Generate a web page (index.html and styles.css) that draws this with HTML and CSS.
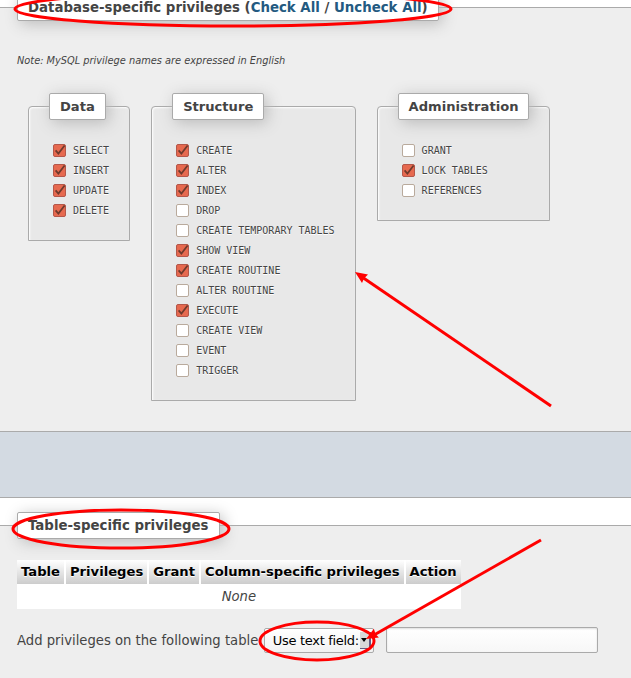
FILE: index.html
```html
<!DOCTYPE html>
<html>
<head>
<meta charset="utf-8">
<title>Privileges</title>
<link rel="stylesheet" href="styles.css">
</head>
<body>
<fieldset class="outer first">
  <legend class="lg">Database-specific privileges (<a href="#">Check All</a> / <a href="#">Uncheck All</a>)</legend>
  <p class="note">Note: MySQL privilege names are expressed in English</p>
  <div class="groups">
    <fieldset class="grp">
      <legend class="lg">Data</legend>
      <div class="item"><span class="cb on"><svg viewBox="0 0 13 13"><path d="M2.6 6.4 L5.4 9.6 L11.6 1.6"/></svg></span><span class="lbl">SELECT</span></div>
      <div class="item"><span class="cb on"><svg viewBox="0 0 13 13"><path d="M2.6 6.4 L5.4 9.6 L11.6 1.6"/></svg></span><span class="lbl">INSERT</span></div>
      <div class="item"><span class="cb on"><svg viewBox="0 0 13 13"><path d="M2.6 6.4 L5.4 9.6 L11.6 1.6"/></svg></span><span class="lbl">UPDATE</span></div>
      <div class="item"><span class="cb on"><svg viewBox="0 0 13 13"><path d="M2.6 6.4 L5.4 9.6 L11.6 1.6"/></svg></span><span class="lbl">DELETE</span></div>
    </fieldset>
    <fieldset class="grp">
      <legend class="lg">Structure</legend>
      <div class="item"><span class="cb on"><svg viewBox="0 0 13 13"><path d="M2.6 6.4 L5.4 9.6 L11.6 1.6"/></svg></span><span class="lbl">CREATE</span></div>
      <div class="item"><span class="cb on"><svg viewBox="0 0 13 13"><path d="M2.6 6.4 L5.4 9.6 L11.6 1.6"/></svg></span><span class="lbl">ALTER</span></div>
      <div class="item"><span class="cb on"><svg viewBox="0 0 13 13"><path d="M2.6 6.4 L5.4 9.6 L11.6 1.6"/></svg></span><span class="lbl">INDEX</span></div>
      <div class="item"><span class="cb"></span><span class="lbl">DROP</span></div>
      <div class="item"><span class="cb"></span><span class="lbl">CREATE TEMPORARY TABLES</span></div>
      <div class="item"><span class="cb on"><svg viewBox="0 0 13 13"><path d="M2.6 6.4 L5.4 9.6 L11.6 1.6"/></svg></span><span class="lbl">SHOW VIEW</span></div>
      <div class="item"><span class="cb on"><svg viewBox="0 0 13 13"><path d="M2.6 6.4 L5.4 9.6 L11.6 1.6"/></svg></span><span class="lbl">CREATE ROUTINE</span></div>
      <div class="item"><span class="cb"></span><span class="lbl">ALTER ROUTINE</span></div>
      <div class="item"><span class="cb on"><svg viewBox="0 0 13 13"><path d="M2.6 6.4 L5.4 9.6 L11.6 1.6"/></svg></span><span class="lbl">EXECUTE</span></div>
      <div class="item"><span class="cb"></span><span class="lbl">CREATE VIEW</span></div>
      <div class="item"><span class="cb"></span><span class="lbl">EVENT</span></div>
      <div class="item"><span class="cb"></span><span class="lbl">TRIGGER</span></div>
    </fieldset>
    <fieldset class="grp">
      <legend class="lg">Administration</legend>
      <div class="item"><span class="cb"></span><span class="lbl">GRANT</span></div>
      <div class="item"><span class="cb on"><svg viewBox="0 0 13 13"><path d="M2.6 6.4 L5.4 9.6 L11.6 1.6"/></svg></span><span class="lbl">LOCK TABLES</span></div>
      <div class="item"><span class="cb"></span><span class="lbl">REFERENCES</span></div>
    </fieldset>
  </div>
</fieldset>
<div class="band"></div>
<fieldset class="outer second">
  <legend class="lg">Table-specific privileges</legend>
  <table class="tbl">
    <thead>
      <tr><th>Table</th><th>Privileges</th><th>Grant</th><th>Column-specific privileges</th><th>Action</th></tr>
    </thead>
    <tbody>
      <tr><td colspan="5" class="none">None</td></tr>
    </tbody>
  </table>
  <div class="addrow">
    <span class="addlbl">Add privileges on the following table:</span>
    <span class="sel"><span class="seltext">Use text field:</span><span class="selbtn"><span class="tri"></span></span></span>
    <span class="txt"></span>
  </div>
</fieldset>
<svg class="marks" width="631" height="678" viewBox="0 0 631 678">
  <g fill="none" stroke="#f00" stroke-width="3">
    <ellipse cx="233" cy="9" rx="218" ry="17"/>
    <ellipse cx="121" cy="529" rx="108" ry="19"/>
    <ellipse cx="317" cy="641" rx="57" ry="19"/>
    <line x1="551" y1="406" x2="362" y2="277"/>
    <line x1="541" y1="540" x2="374" y2="635"/>
  </g>
  <g fill="#f00">
    <polygon points="355,272 368,274.5 364,278.5 362,283"/>
    <polygon points="366,639 373.9,628.7 375.5,634 378.9,637.4"/>
  </g>
</svg>
</body>
</html>
```
FILE: styles.css
```css
html, body {
  margin: 0;
  padding: 0;
}
body {
  background: #fff;
  font-family: "DejaVu Sans", sans-serif;
  font-size: 13.2px;
  color: #444;
  width: 631px;
  height: 678px;
  overflow: hidden;
  position: relative;
}
a {
  color: #235a81;
  text-decoration: none;
}
.outer {
  margin: 0;
  border: none;
  border-top: 1px solid #aaa;
  border-bottom: 1px solid #aaa;
  background: #eee;
  padding: 0 17px;
  min-width: 0;
}
.first {
  margin-top: -6px;
  padding-bottom: 30px;
}
.lg {
  background: #fff;
  border: 1px solid #aaa;
  border-radius: 2px;
  box-shadow: 3px 3px 15px #bbb;
  padding: 5px 10px;
  font-weight: bold;
  line-height: 15px;
  font-size: 10pt;
  color: #444;
}
.note {
  margin: 34px 0 0 0;
  font-size: 9.8px;
  line-height: 12px;
  font-style: italic;
  color: #444;
}
.groups {
  display: flex;
  align-items: flex-start;
  gap: 21px;
  margin-top: 26px;
  padding-left: 11px;
}
.grp {
  margin: 0;
  border: 1px solid #aaa;
  border-radius: 4px 4px 0 0;
  background: #e8e8e8;
  box-shadow: 1px 1px 2px #fff inset;
  padding: 20px 20px 20px 20px;
  min-width: 0;
  text-shadow: 0 1px 0 #fff;
}
.grp .lg {
  font-size: 13.1px;
}
.item {
  display: flex;
  align-items: center;
  height: 20px;
}
.cb {
  width: 13px;
  height: 13px;
  box-sizing: border-box;
  border: 1px solid #b9aa9c;
  border-radius: 2px;
  background: #fff;
  margin-left: 4px;
  margin-right: 7px;
  flex: none;
  position: relative;
}
.cb.on {
  background: #e6694f;
  border-color: #b4574a;
}
.cb svg {
  position: absolute;
  left: -1px;
  top: -1px;
  width: 13px;
  height: 13px;
  overflow: visible;
}
.cb svg path {
  fill: none;
  stroke: #6e3a2c;
  stroke-width: 1.7;
}
.lbl {
  font-family: "DejaVu Sans Mono", monospace;
  font-size: 10px;
  color: #444;
  white-space: nowrap;
}
.band {
  height: 65px;
  background: #d3dae2;
  border-bottom: 1px solid #aaa;
}
.second {
  margin-top: 14px;
  padding-bottom: 40px;
}
.tbl {
  margin-top: 21px;
  border-collapse: collapse;
  border-spacing: 0;
}
.tbl th {
  background: linear-gradient(#fff, #ccc);
  color: #000;
  font-weight: bold;
  font-size: 13.15px;
  padding: 4px 4px;
  line-height: 16px;
  border-left: 2px solid #fff;
  white-space: nowrap;
  text-shadow: 0 1px 0 #fff;
}
.tbl th:first-child {
  border-left: none;
}
.tbl td.none {
  background: #fff;
  text-align: center;
  font-style: italic;
  padding: 4px;
  line-height: 17px;
}
.addrow {
  display: flex;
  align-items: center;
  margin-top: 18px;
  height: 26px;
}
.addlbl {
  margin-right: 1px;
}
.sel {
  display: flex;
  align-items: center;
  box-sizing: border-box;
  width: 110px;
  height: 25px;
  border: 1px solid #aaa;
  border-radius: 2px;
  background: linear-gradient(#fff, #f2f2f2);
  padding-left: 8px;
  color: #000;
}
.seltext {
  flex: 1;
  white-space: nowrap;
  font-size: 13px;
  letter-spacing: -0.3px;
}
.selbtn {
  width: 9px;
  height: 16px;
  background: #d8d8d8;
  border-right: 2px solid #66597e;
  border-bottom: 1px solid #66597e;
  margin-right: 2px;
  display: flex;
  align-items: center;
  justify-content: center;
}
.tri {
  width: 0;
  height: 0;
  border-left: 3px solid transparent;
  border-right: 3px solid transparent;
  border-top: 4px solid #000;
}
.txt {
  box-sizing: border-box;
  width: 212px;
  height: 26px;
  margin-left: 12px;
  border: 1px solid #aaa;
  border-radius: 2px;
  background: linear-gradient(#fff, #f7f7f7);
  box-shadow: inset 0 1px 2px #ddd;
}
.marks {
  position: absolute;
  left: 0;
  top: 0;
  pointer-events: none;
}
```
